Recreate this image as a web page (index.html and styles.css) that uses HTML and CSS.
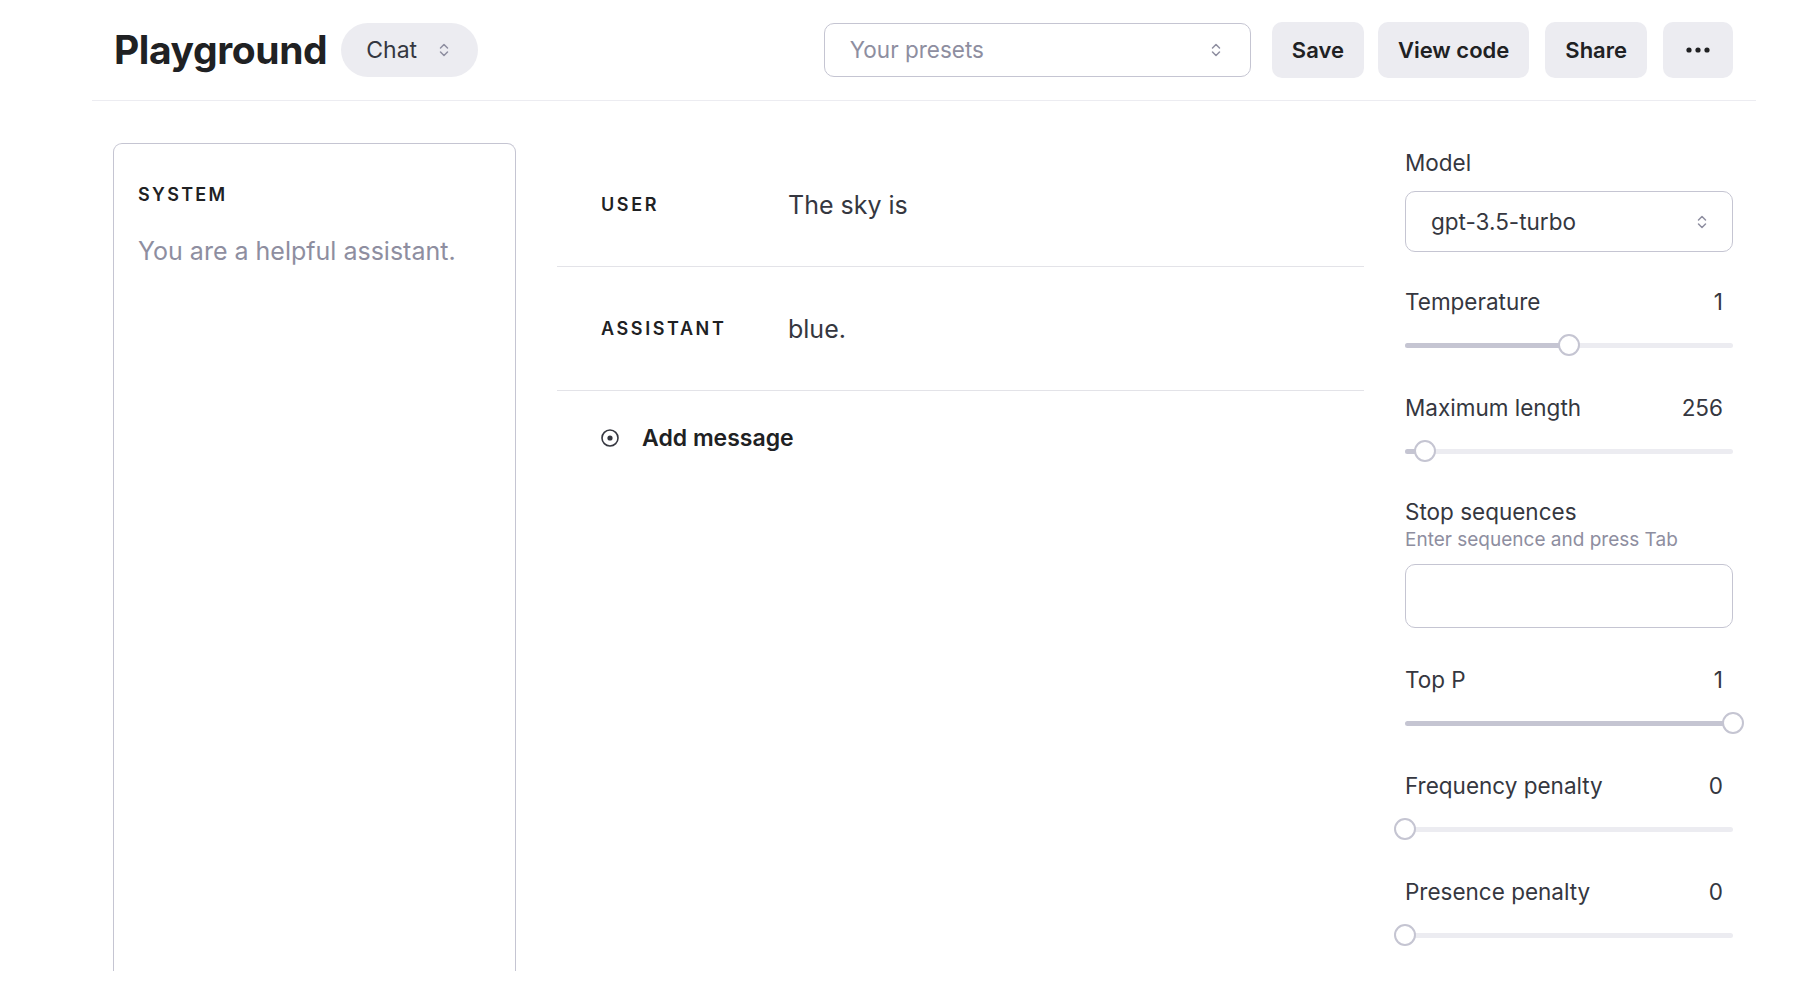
FILE: index.html
```html
<!DOCTYPE html>
<html lang="en">
<head>
<meta charset="utf-8">
<title>Playground</title>
<link rel="stylesheet" href="styles.css">
</head>
<body>
<div class="page">
  <header class="header">
    <h1 class="title">Playground</h1>
    <button class="mode-pill">Chat
      <svg class="updown" width="12" height="18" viewBox="0 0 12 18"><path d="M2.5 7 L6 3.5 L9.5 7 M2.5 11 L6 14.5 L9.5 11" fill="none" stroke="#8e8ea0" stroke-width="1.5" stroke-linecap="round" stroke-linejoin="round"/></svg>
    </button>
    <div class="spacer"></div>
    <div class="presets">
      <span class="placeholder">Your presets</span>
      <svg class="updown" width="12" height="18" viewBox="0 0 12 18"><path d="M2.5 7 L6 3.5 L9.5 7 M2.5 11 L6 14.5 L9.5 11" fill="none" stroke="#8e8ea0" stroke-width="1.5" stroke-linecap="round" stroke-linejoin="round"/></svg>
    </div>
    <div class="actions">
      <button class="btn btn-save">Save</button>
      <button class="btn">View code</button>
      <button class="btn">Share</button>
      <button class="btn btn-more" aria-label="More">
        <svg width="26" height="8" viewBox="0 0 26 8"><circle cx="4" cy="4" r="2.6" fill="#202123"/><circle cx="13" cy="4" r="2.6" fill="#202123"/><circle cx="22" cy="4" r="2.6" fill="#202123"/></svg>
      </button>
    </div>
  </header>

  <main class="main">
    <section class="system">
      <div class="system-label">SYSTEM</div>
      <div class="system-text">You are a helpful assistant.</div>
    </section>

    <section class="messages">
      <div class="msg">
        <div class="role">USER</div>
        <div class="content">The sky is</div>
      </div>
      <div class="msg">
        <div class="role">ASSISTANT</div>
        <div class="content">blue.</div>
      </div>
      <div class="add">
        <svg width="20" height="20" viewBox="0 0 20 20"><circle cx="10" cy="10" r="8" fill="none" stroke="#353740" stroke-width="1.6"/><circle cx="10" cy="10" r="2.6" fill="#353740"/></svg>
        <span>Add message</span>
      </div>
    </section>

    <aside class="settings">
      <div class="group">
        <div class="label-row"><span>Model</span></div>
        <div class="select">
          <span>gpt-3.5-turbo</span>
          <svg class="updown" width="12" height="18" viewBox="0 0 12 18"><path d="M2.5 7 L6 3.5 L9.5 7 M2.5 11 L6 14.5 L9.5 11" fill="none" stroke="#8e8ea0" stroke-width="1.5" stroke-linecap="round" stroke-linejoin="round"/></svg>
        </div>
      </div>

      <div class="group">
        <div class="label-row slider-label"><span>Temperature</span><span class="value">1</span></div>
        <div class="slider"><div class="track"><div class="fill" style="width:50%"></div></div><div class="thumb" style="left:50%"></div></div>
      </div>

      <div class="group">
        <div class="label-row slider-label"><span>Maximum length</span><span class="value">256</span></div>
        <div class="slider"><div class="track"><div class="fill" style="width:6.2%"></div></div><div class="thumb" style="left:6.2%"></div></div>
      </div>

      <div class="group group-stop">
        <div class="label-row"><span>Stop sequences</span></div>
        <div class="helper">Enter sequence and press Tab</div>
        <div class="textbox"></div>
      </div>

      <div class="group">
        <div class="label-row slider-label"><span>Top P</span><span class="value">1</span></div>
        <div class="slider"><div class="track"><div class="fill" style="width:100%"></div></div><div class="thumb" style="left:100%"></div></div>
      </div>

      <div class="group">
        <div class="label-row slider-label"><span>Frequency penalty</span><span class="value">0</span></div>
        <div class="slider"><div class="track"><div class="fill" style="width:0%"></div></div><div class="thumb" style="left:0%"></div></div>
      </div>

      <div class="group">
        <div class="label-row slider-label"><span>Presence penalty</span><span class="value">0</span></div>
        <div class="slider"><div class="track"><div class="fill" style="width:0%"></div></div><div class="thumb" style="left:0%"></div></div>
      </div>
    </aside>
  </main>
</div>
</body>
</html>
```

FILE: styles.css
```css
* { box-sizing: border-box; }

html, body {
  margin: 0;
  padding: 0;
  background: #ffffff;
}

body {
  font-family: Inter, "Noto Sans", "Liberation Sans", sans-serif;
  color: #353740;
  width: 1802px;
  height: 994px;
  overflow: hidden;
}

.page {
  height: 971px;
  overflow: hidden;
}

button {
  font-family: inherit;
  border: none;
  cursor: pointer;
}

/* Header */
.header {
  height: 101px;
  margin: 0 46px 0 92px;
  padding: 0 23px 1px 22px;
  border-bottom: 1px solid #ececf1;
  display: flex;
  align-items: center;
}

.title {
  margin: 0;
  font-size: 39px;
  font-weight: 700;
  letter-spacing: -0.4px;
  color: #202123;
}

.mode-pill {
  margin-left: 14px;
  height: 54px;
  padding: 0 28px 0 25px;
  border-radius: 27px;
  background: #ececf1;
  color: #353740;
  font-size: 23px;
  display: flex;
  align-items: center;
  gap: 21px;
}

.spacer { flex: 1; }

.presets {
  width: 427px;
  height: 54px;
  border: 1.5px solid #c5c5d2;
  border-radius: 10px;
  padding: 0 28px 0 25px;
  display: flex;
  align-items: center;
  justify-content: space-between;
}

.placeholder {
  font-size: 22.5px;
  color: #8e8ea0;
}

.actions {
  margin-left: 21px;
  display: flex;
  gap: 16px;
}

.btn {
  height: 56px;
  padding: 0 20px;
  border-radius: 10px;
  background: #ececf1;
  color: #202123;
  font-size: 22px;
  font-weight: 600;
  display: flex;
  align-items: center;
}

.btn-save {
  margin-right: -2px;
}

.btn-more {
  width: 70px;
  justify-content: center;
  padding: 0;
}

/* Main */
.main {
  display: grid;
  grid-template-columns: 403px 1fr 328px;
  column-gap: 41px;
  padding: 42px 69px 0 113px;
}

.system {
  height: 828px;
  border: 1.5px solid #c5c5d2;
  border-bottom: none;
  border-radius: 9px 9px 0 0;
  padding: 39px 24px 0 24px;
}

.system-label {
  font-size: 18px;
  font-weight: 600;
  letter-spacing: 2.3px;
  color: #202123;
  line-height: 24px;
}

.system-text {
  margin-top: 28px;
  font-size: 25px;
  color: #8e8ea0;
  line-height: 32px;
}

/* Messages */
.messages {
  display: flex;
  flex-direction: column;
}

.msg {
  height: 124px;
  display: flex;
  align-items: center;
  padding-left: 44px;
  border-bottom: 1.5px solid #e3e3e8;
}

.role {
  width: 187px;
  font-size: 18px;
  font-weight: 600;
  letter-spacing: 2.6px;
  color: #202123;
}

.content {
  font-size: 25px;
  color: #353740;
}

.add {
  height: 94px;
  display: flex;
  align-items: center;
  padding-left: 43px;
  gap: 22px;
  font-size: 23px;
  font-weight: 600;
  color: #202123;
}

/* Settings */
.settings {
  display: flex;
  flex-direction: column;
  gap: 36px;
  padding-top: 6px;
}

.group {
  display: flex;
  flex-direction: column;
}

.group-stop {
  margin-top: -2px;
  margin-bottom: 2px;
}

.label-row {
  display: flex;
  justify-content: space-between;
  font-size: 22.5px;
  line-height: 28px;
  color: #353740;
  margin-bottom: 14px;
}

.slider-label {
  margin-bottom: 18px;
}

.value {
  padding-right: 10px;
}

.select {
  height: 61px;
  border: 1.5px solid #c5c5d2;
  border-radius: 10px;
  padding: 0 24px 0 25px;
  display: flex;
  align-items: center;
  justify-content: space-between;
  font-size: 22.5px;
  color: #353740;
}

.helper {
  margin-top: -12px;
  font-size: 19px;
  line-height: 24px;
  color: #8e8ea0;
  margin-bottom: 12px;
}

.textbox {
  height: 64px;
  border: 1.5px solid #c5c5d2;
  border-radius: 10px;
}

.slider {
  position: relative;
  height: 22px;
  margin-bottom: 2px;
  display: flex;
  align-items: center;
}

.track {
  width: 100%;
  height: 5px;
  border-radius: 3px;
  background: #ececf1;
  overflow: hidden;
}

.fill {
  height: 100%;
  background: #c5c5d2;
}

.thumb {
  position: absolute;
  top: 0;
  width: 22px;
  height: 22px;
  margin-left: -11px;
  border-radius: 50%;
  background: #ffffff;
  border: 2.5px solid #c5c5d2;
}
```
